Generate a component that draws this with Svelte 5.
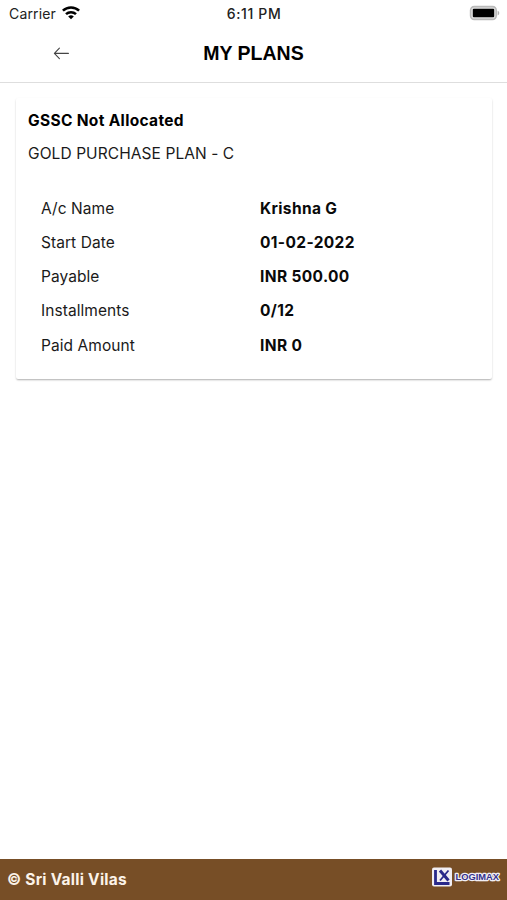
<script lang="ts">
  type Row = { label: string; value: string }

  const plan = {
    title: 'GSSC Not Allocated',
    scheme: 'GOLD PURCHASE PLAN - C'
  }

  const rows: Row[] = [
    { label: 'A/c Name', value: 'Krishna G' },
    { label: 'Start Date', value: '01-02-2022' },
    { label: 'Payable', value: 'INR 500.00' },
    { label: 'Installments', value: '0/12' },
    { label: 'Paid Amount', value: 'INR 0' }
  ]
</script>

<div class="screen">
  <div class="status">
    <div class="carrier">
      <span>Carrier</span>
      <svg class="wifi" width="18" height="14" viewBox="0 0 18 14" fill="none" stroke="#000" stroke-width="2.5">
        <path d="M.9 4.7a11.6 11.6 0 0 1 16.2 0" />
        <path d="M4 8.2a7.2 7.2 0 0 1 10 0" />
        <path d="M6.2 10.5a4.2 4.2 0 0 1 5.6 0L9 13.3Z" fill="#000" stroke="none" />
      </svg>
    </div>
    <span class="clock">6:11 PM</span>
    <svg class="battery" width="31" height="16" viewBox="0 0 31 16">
      <rect x="1.6" y="1.6" width="25.6" height="12.8" rx="3.6" fill="#e4e4e4" stroke="#bababa" stroke-width="1.6" />
      <rect x="3.8" y="3.7" width="21.4" height="8.6" rx="1" fill="#000" />
      <path d="M28.6 5.7c2.2.7 2.2 4 0 4.7Z" fill="#b0b0b0" />
    </svg>
  </div>

  <header>
    <button class="back" aria-label="Back">
      <svg width="16" height="14" viewBox="0 0 16 14" fill="none" stroke="#444" stroke-width="1.1" stroke-linecap="round" stroke-linejoin="round">
        <path d="M6.4 2.2 1.4 7.4l5 5.2M1.4 7.4h14" />
      </svg>
    </button>
    <h1>MY PLANS</h1>
  </header>

  <main>
    <section class="card">
      <h2>{plan.title}</h2>
      <p class="scheme">{plan.scheme}</p>
      <dl>
        {#each rows as row (row.label)}
          <div class="row">
            <dt>{row.label}</dt>
            <dd>{row.value}</dd>
          </div>
        {/each}
      </dl>
    </section>
  </main>

  <footer>
    <span class="copy">© Sri Valli Vilas</span>
    <svg class="logo" width="70" height="22" viewBox="0 0 70 22">
      <rect x="1" y="1.5" width="20" height="19" rx="2" fill="#f1eef3" />
      <path d="M4.5 4v13.5h14" fill="none" stroke="#29288a" stroke-width="2.8" />
      <path d="m9 4.5 8.5 10" fill="none" stroke="#29288a" stroke-width="3" />
      <path d="M17.5 4.5 9 14.5" fill="none" stroke="#29288a" stroke-width="1.8" />
      <text x="24.5" y="14" textLength="43.5" lengthAdjust="spacingAndGlyphs">LOGIMAX</text>
    </svg>
  </footer>
</div>

<style>
  :global(body) { background: #fff; }

  .screen {
    height: 100vh;
    display: flex; flex-direction: column;
    background: #fff;
    color: #1a1a1a;
    font-family: Inter, "Liberation Sans", sans-serif;
    font-size: 15.5px;
    overflow: hidden;
  }

  .status {
    display: grid;
    grid-template-columns: 1fr auto 1fr;
    align-items: center;
    height: 27px;
    padding: 0 7px 0 9px;
    font-size: 14px;
    color: #222;
  }
  .carrier { display: flex; align-items: center; gap: 6px; letter-spacing: 0.15px; }
  .wifi { display: block; margin-bottom: 1px; }
  .clock { font-weight: 500; letter-spacing: 0.63px; margin-right: 1px; }
  .battery { justify-self: end; margin-bottom: 1px; }

  header {
    display: grid;
    grid-template-columns: 1fr auto 1fr;
    align-items: center;
    height: 55px;
    border-bottom: 1px solid #dedede;
  }
  .back {
    justify-self: start;
    display: flex;
    margin: 0 0 3px 53px; padding: 0;
    border: none; background: none;
  }
  h1 {
    margin: 0 0 2px;
    font: bold 19.5px "Liberation Sans", Arial, sans-serif;
    color: #000;
  }

  main { flex: 1; padding: 15px 15px 0 16px; }

  .card {
    box-sizing: border-box;
    height: 281px;
    padding: 12px 12px 0;
    border-radius: 2px;
    background: #fff;
    box-shadow: 0 2px 2px -1px rgba(0, 0, 0, 0.16), 0 1px 2px rgba(0, 0, 0, 0.18);
  }
  h2 {
    margin: 0;
    font-size: 15.5px; font-weight: 700; line-height: 22px;
    letter-spacing: 0.33px;
    color: #000;
  }
  .scheme { margin: 11px 0 0; line-height: 22px; letter-spacing: 0.08px; }

  dl { margin: 26px 0 0 13px; }
  .row { display: grid; grid-template-columns: 219px 1fr; height: 34.25px; align-items: center; }
  dt { letter-spacing: 0.06px; }
  dd { margin: 0; font-weight: 700; letter-spacing: 0.36px; color: #0a0a0a; }

  footer {
    display: flex; justify-content: space-between; align-items: center;
    height: 41px;
    padding: 0 6px 0 7px;
    background: #774e26;
  }
  .copy { color: #fcf3e9; font-weight: 700; letter-spacing: 0.24px; }
  .logo { margin-bottom: 6px; }
  .logo text {
    font: bold 8.5px "Liberation Sans", Arial, sans-serif;
    fill: #33318c;
    stroke: #f1eef3; stroke-width: 2.4; stroke-linejoin: round;
    paint-order: stroke;
  }
</style>
